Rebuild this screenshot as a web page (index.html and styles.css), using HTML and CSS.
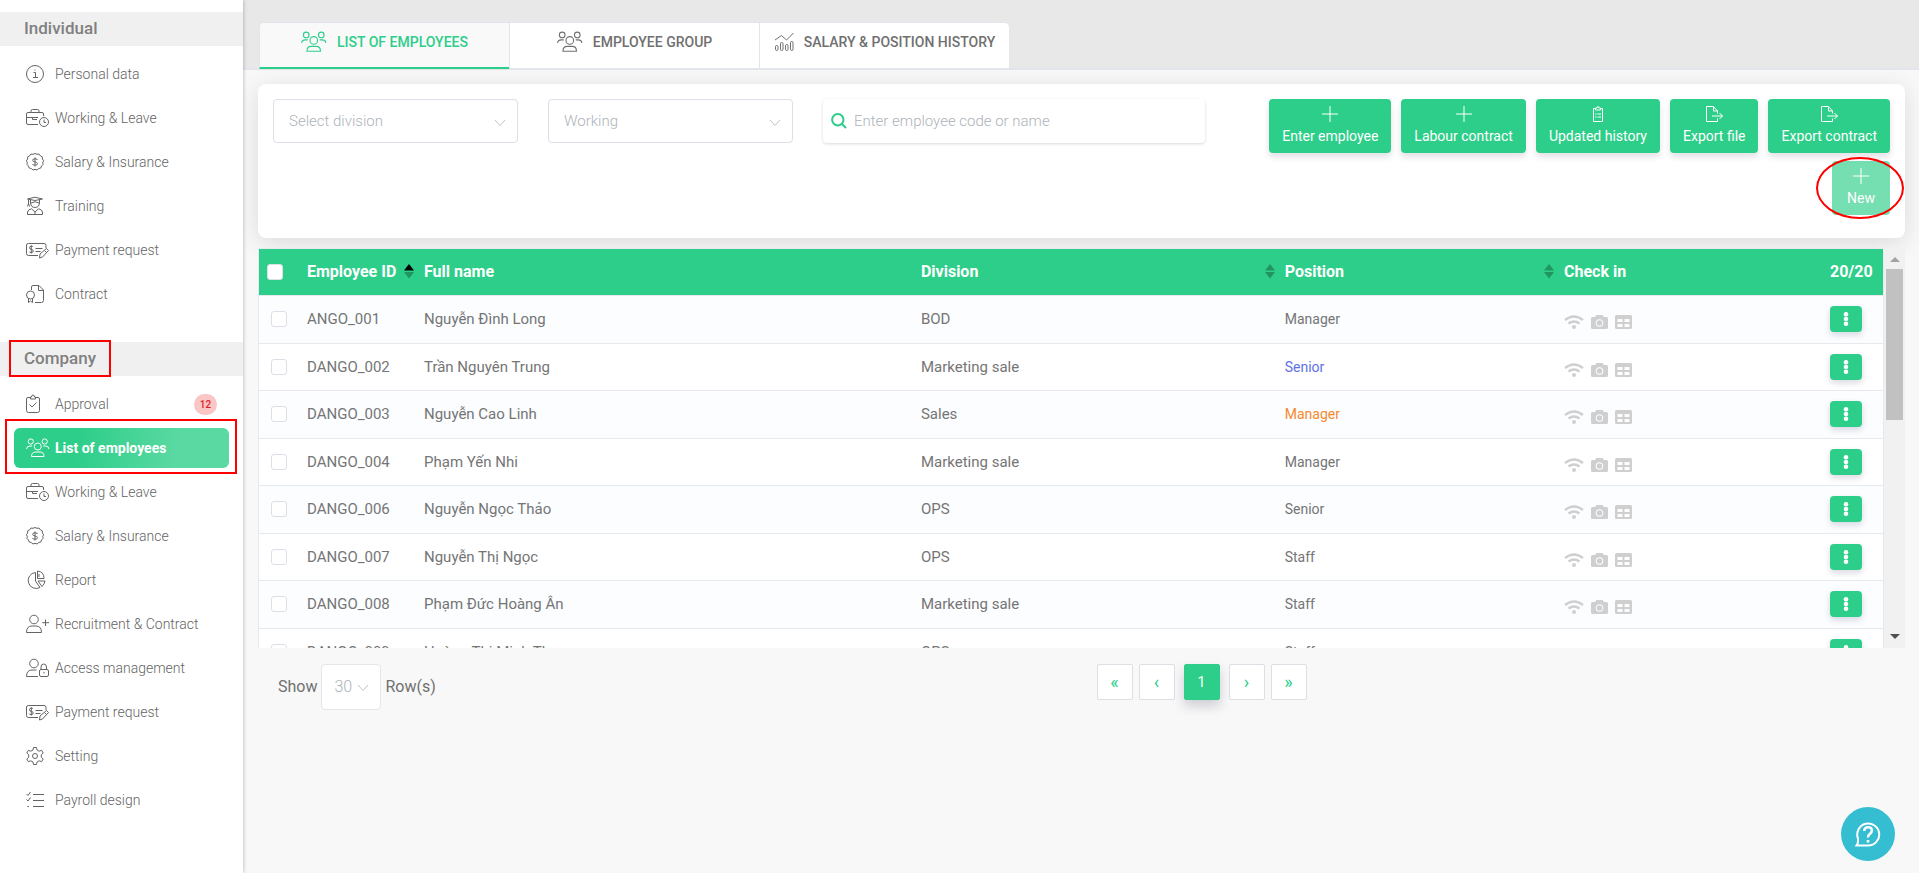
FILE: index.html
```html
<!DOCTYPE html>
<html lang="en">
<head>
<meta charset="utf-8">
<title>List of employees</title>
<link rel="stylesheet" href="styles.css">
</head>
<body>
<svg class="sprite" aria-hidden="true">
  <symbol id="i-info" viewBox="0 0 24 20"><circle cx="9" cy="10" r="8.5"/><path d="M7.5 8.5H9.500v5M7 13.500h5M8.500 6h1"/></symbol>
  <symbol id="i-work" viewBox="0 0 24 20"><path d="M12 16.500H2Q.5 16.500 .5 15V6Q.5 4.500 2 4.500H16Q17.500 4.500 17.500 6V8M5 4.500V3Q5 1.500 6.500 1.500H11.500Q13 1.500 13 3V4.500M.5 9.500H12M6.500 9.500V11.500H11"/><circle cx="18" cy="14" r="4.500"/><path d="M18 11.500V14.500H20"/></symbol>
  <symbol id="i-salary" viewBox="0 0 24 20"><path d="M9 1.500 11 2.300 13 2 14.300 3.800 16.300 4.800 16.400 7 17.600 8.800 16.800 10.500 17 12.500 15.500 14 14.800 16 12.700 16.600 11 18 9 17.300 7 18 5.300 16.600 3.200 16 2.500 14 1 12.500 1.300 10.500.4 8.800 1.600 7 1.700 4.800 3.700 3.800 5 2 7 2.300Z"/><path d="M11.500 8Q11.500 6.800 9 6.800T6.700 8.300Q6.700 9.700 9 10T11.500 11.700Q11.500 13.200 9 13.200T6.500 12M9 5.500V14.500"/></symbol>
  <symbol id="i-train" viewBox="0 0 24 20"><path d="M1.500 3 9 1.200 16.500 3 9 4.500ZM4.500 3.800V7Q5 11.500 9 11.500T13.500 7V3.800M2.500 3.300V8M1.500 10.500 2.500 7.500 3.500 10.500M5 7Q9 4.500 13 7M1.500 18.500V16Q2 13.500 5.500 12.800L9 16 12.500 12.800Q16 13.500 16.500 16V18.500ZM9 16V18.500"/></symbol>
  <symbol id="i-pay" viewBox="0 0 24 20"><path d="M12 15.500H2.500Q.5 15.500 .5 13.500V5Q.5 3.500 2.500 3.500H18Q20 3.500 20 5.500V8M7 6.800Q6.500 6.200 5.300 6.200 3.500 6.200 3.500 7.700T5.300 9.300 7.200 11 5.300 12.600 3.300 11.700M5.300 5.200V13.500M9.500 8.500H16.500M9.500 11.500H14.500M14 14 20.500 8.500 22.500 10.500 16.500 17 13.500 18ZM18.500 10.500 20.500 12.500"/></symbol>
  <symbol id="i-contract" viewBox="0 0 24 20"><path d="M5.500 6V3Q5.500 1.500 7 1.500H13L17.500 6V16.500Q17.500 18.500 15.500 18.500H9M12.500 1.500V6.500H17.500"/><circle cx="4.500" cy="11" r="4"/><path d="M2.500 14.500V18.500L4.500 17 6.500 18.500V14.500"/></symbol>
  <symbol id="i-approve" viewBox="0 0 24 20"><path d="M4.500 3.500H2Q.5 3.500 .5 5V16.500Q.5 18.500 2.500 18.500H11.500Q13.500 18.500 13.500 16.500V5Q13.500 3.500 12 3.500H9.500M4.500 5V3H5.500Q5.500 1 7 1T8.500 3H9.500V5ZM3.500 10.500 6 13 10.500 8.500"/></symbol>
  <symbol id="i-people" viewBox="0 0 24 20"><circle cx="4.800" cy="3.500" r="2.600"/><circle cx="18.700" cy="3.500" r="2.600"/><circle cx="11.800" cy="8.500" r="3.500"/><path d="M.6 11Q.6 8 4 8H6.200M22.900 11Q22.900 8 19.500 8H17.300M5.500 18.500Q5.500 14 9.500 14H14Q18 14 18 18.500Z"/></symbol>
  <symbol id="i-report" viewBox="0 0 24 20"><path d="M9.500 2.500A8 8 0 1 0 14 17.500L9.500 11ZM11.500 1V8.500H18Q18 1.500 11.500 1ZM12 11H19Q18.500 14 16 16.500ZM13 4V7"/></symbol>
  <symbol id="i-recruit" viewBox="0 0 24 20"><circle cx="8" cy="5.500" r="4.300"/><path d="M.5 18.500Q.5 12 6 12H10Q15.500 12 15.500 18.500ZM19.500 5.500V12M16.200 8.700H23"/></symbol>
  <symbol id="i-access" viewBox="0 0 24 20"><circle cx="8" cy="5.500" r="4.300"/><path d="M12 18.500H.5Q.5 12 6 12H10.500M15 11.500V9Q15 6 17.700 6T20.500 9V11.500M18 14V15.500"/><rect x="13.500" y="11.500" width="9" height="7" rx="1.500"/></symbol>
  <symbol id="i-setting" viewBox="0 0 24 20"><circle cx="9" cy="10" r="2.500"/><path d="M7.500 1.500H10.500L11 4 13.200 5.200 15.600 4.300 17.200 7 15.300 8.700V11.300L17.200 13 15.600 15.700 13.200 14.800 11 16 10.500 18.500H7.500L7 16 4.800 14.800 2.400 15.700.8 13 2.700 11.300V8.700L.8 7 2.400 4.300 4.800 5.200 7 4Z"/></symbol>
  <symbol id="i-payroll" viewBox="0 0 24 20"><path d="M7 4.500H18M7 10.500H18M7 16.500H18M.5 4 2 5.500 4.500 2M.5 9.500 2 11 4.500 7.500M1.500 16.500H3"/></symbol>
  <symbol id="i-chart" viewBox="0 0 20 20"><path d="M1 8 7.500 3.500 12.500 8 19.500 1"/><rect x="1.500" y="13.500" width="2.500" height="5" rx="1.200"/><rect x="6.500" y="10.500" width="2.500" height="8" rx="1.200"/><rect x="11.500" y="12.500" width="2.500" height="6" rx="1.200"/><rect x="16.500" y="9.500" width="2.500" height="9" rx="1.200"/></symbol>
  <symbol id="i-plus" viewBox="0 0 16 16"><path d="M8 0V16M0 8H16"/></symbol>
  <symbol id="i-list" viewBox="0 0 16 16"><path d="M5.500 2.500H3.500V15.500H12.500V2.500H10.500M5.500 4V2H7Q7 .5 8 .5T9 2H10.500V4ZM5 8H6.500M5 11H6.500M7.500 8H11M7.500 11H11"/></symbol>
  <symbol id="i-export" viewBox="0 0 18 16"><path d="M12.500 7.500V5L8.500 .5H1.500V15.500H12.500V12.500M8.500 .5V5H12.500M7 10H17.500M14.500 7 17.500 10 14.500 13"/></symbol>
  <symbol id="i-down" viewBox="0 0 12 8"><path d="M1 1 6 6.500 11 1"/></symbol>
  <symbol id="i-search" viewBox="0 0 16 16"><circle cx="6.800" cy="6.800" r="5.700"/><path d="M11 11 15 15"/></symbol>
  <symbol id="i-wifi" viewBox="0 0 20 14"><path d="M1 5Q10-2 19 5M4.500 8.500Q10 4.500 15.500 8.500" fill="none" stroke="currentColor" stroke-width="2.400"/><circle cx="10" cy="12" r="2"/></symbol>
  <symbol id="i-camera" viewBox="0 0 17 14"><path fill-rule="evenodd" d="M1.500 2H4L5.500 0H11.500L13 2H15.500Q17 2 17 3.500V12.500Q17 14 15.500 14H1.500Q0 14 0 12.500V3.500Q0 2 1.500 2ZM8.500 4.200A3.800 3.800 0 1 0 8.500 11.800 3.800 3.800 0 1 0 8.500 4.200ZM8.500 5.200A2.800 2.800 0 1 1 8.500 10.800 2.800 2.800 0 1 1 8.500 5.200Z"/></symbol>
  <symbol id="i-grid" viewBox="0 0 17 14"><path fill-rule="evenodd" d="M1.500 0H15.500Q17 0 17 1.500V12.500Q17 14 15.500 14H1.500Q0 14 0 12.500V1.500Q0 0 1.500 0ZM2.500 4V7H7.500V4ZM9.500 4V7H14.500V4ZM2.500 9V12H7.500V9ZM9.500 9V12H14.500V9Z"/></symbol>
  <symbol id="i-dots" viewBox="0 0 6 14"><circle cx="3" cy="2.300" r="2.300"/><circle cx="3" cy="7" r="2.300"/><circle cx="3" cy="11.700" r="2.300"/></symbol>
  <symbol id="i-sort" viewBox="0 0 10 15"><path d="M5 0 10 6.500H0Z" fill="currentColor"/><path d="M0 8H10L5 14.500Z"/></symbol>
  <symbol id="i-help" viewBox="0 0 26 26"><path d="M3 17.500A11 11 0 1 1 13 24.500H1.500Q3.500 22 3 17.500Z" stroke-width="2"/><path d="M9.300 10Q9.300 6.300 13.200 6.300T16.800 9.800Q16.800 11.500 14.800 13T13 16.500" stroke-width="2.600"/><path d="M13 19V21.500" stroke-width="2.600"/></symbol>
</svg>

<div class="app">
  <nav class="sidebar">
    <section class="group">
      <h2 class="group-title">Individual</h2>
      <a class="item" href="#"><svg class="icon"><use href="#i-info"/></svg>Personal data</a>
      <a class="item" href="#"><svg class="icon"><use href="#i-work"/></svg>Working &amp; Leave</a>
      <a class="item" href="#"><svg class="icon"><use href="#i-salary"/></svg>Salary &amp; Insurance</a>
      <a class="item" href="#"><svg class="icon"><use href="#i-train"/></svg>Training</a>
      <a class="item" href="#"><svg class="icon"><use href="#i-pay"/></svg>Payment request</a>
      <a class="item" href="#"><svg class="icon"><use href="#i-contract"/></svg>Contract</a>
    </section>
    <section class="group">
      <h2 class="group-title">Company<span class="mark mark-title"></span></h2>
      <a class="item" href="#"><svg class="icon"><use href="#i-approve"/></svg>Approval<span class="badge">12</span></a>
      <a class="item active" href="#"><svg class="icon"><use href="#i-people"/></svg>List of employees<span class="mark mark-item"></span></a>
      <a class="item" href="#"><svg class="icon"><use href="#i-work"/></svg>Working &amp; Leave</a>
      <a class="item" href="#"><svg class="icon"><use href="#i-salary"/></svg>Salary &amp; Insurance</a>
      <a class="item" href="#"><svg class="icon"><use href="#i-report"/></svg>Report</a>
      <a class="item" href="#"><svg class="icon"><use href="#i-recruit"/></svg>Recruitment &amp; Contract</a>
      <a class="item" href="#"><svg class="icon"><use href="#i-access"/></svg>Access management</a>
      <a class="item" href="#"><svg class="icon"><use href="#i-pay"/></svg>Payment request</a>
      <a class="item" href="#"><svg class="icon"><use href="#i-setting"/></svg>Setting</a>
      <a class="item" href="#"><svg class="icon"><use href="#i-payroll"/></svg>Payroll design</a>
    </section>
  </nav>

  <div class="page">
    <header class="topbar">
      <div class="tabs">
        <a class="tab current" href="#"><svg class="icon tab-icon"><use href="#i-people"/></svg>LIST OF EMPLOYEES</a>
        <a class="tab" href="#"><svg class="icon tab-icon"><use href="#i-people"/></svg>EMPLOYEE GROUP</a>
        <a class="tab" href="#"><svg class="icon chart-icon"><use href="#i-chart"/></svg>SALARY &amp; POSITION HISTORY</a>
      </div>
    </header>

    <main class="content">
      <form class="filters">
        <div class="pick"><select class="select" aria-label="Division"><option>Select division</option></select><svg class="chevron"><use href="#i-down"/></svg></div>
        <div class="pick"><select class="select" aria-label="Status"><option>Working</option></select><svg class="chevron"><use href="#i-down"/></svg></div>
        <label class="search"><svg class="search-icon"><use href="#i-search"/></svg><input class="search-input" type="text" aria-label="Search" placeholder="Enter employee code or name"></label>
        <div class="actions">
          <button class="action" type="button"><svg class="action-icon"><use href="#i-plus"/></svg>Enter employee</button>
          <button class="action" type="button"><svg class="action-icon"><use href="#i-plus"/></svg>Labour contract</button>
          <button class="action" type="button"><svg class="action-icon"><use href="#i-list"/></svg>Updated history</button>
          <button class="action" type="button"><svg class="action-icon"><use href="#i-export"/></svg>Export file</button>
          <button class="action" type="button"><svg class="action-icon"><use href="#i-export"/></svg>Export contract</button>
          <div class="new"><button class="action faded" type="button"><svg class="action-icon"><use href="#i-plus"/></svg>New</button><span class="ring"></span></div>
        </div>
      </form>

      <div class="grid">
        <div class="grid-view">
          <table class="table">
            <colgroup><col class="c-check"><col class="c-id"><col class="c-name"><col class="c-div"><col class="c-pos"><col><col class="c-menu"></colgroup>
            <thead>
              <tr>
                <th class="check-head"><input class="tick" type="checkbox" aria-label="Select all"></th>
                <th><span class="head">Employee ID<svg class="sort asc"><use href="#i-sort"/></svg></span></th>
                <th>Full name</th>
                <th><span class="head">Division<svg class="sort"><use href="#i-sort"/></svg></span></th>
                <th><span class="head">Position<svg class="sort"><use href="#i-sort"/></svg></span></th>
                <th>Check in</th>
                <th>20/20</th>
              </tr>
            </thead>
            <tbody>
              <tr><td class="check"><input class="tick" type="checkbox" aria-label="ANGO_001"></td><td>ANGO_001</td><td>Nguyễn Đình Long</td><td>BOD</td><td class="position">Manager</td><td><span class="ways"><svg class="wifi"><use href="#i-wifi"/></svg><svg class="way"><use href="#i-camera"/></svg><svg class="way"><use href="#i-grid"/></svg></span></td><td><button class="menu" aria-label="Actions"><svg class="dots"><use href="#i-dots"/></svg></button></td></tr>
              <tr><td class="check"><input class="tick" type="checkbox" aria-label="DANGO_002"></td><td>DANGO_002</td><td>Trần Nguyên Trung</td><td>Marketing sale</td><td class="position violet">Senior</td><td><span class="ways"><svg class="wifi"><use href="#i-wifi"/></svg><svg class="way"><use href="#i-camera"/></svg><svg class="way"><use href="#i-grid"/></svg></span></td><td><button class="menu" aria-label="Actions"><svg class="dots"><use href="#i-dots"/></svg></button></td></tr>
              <tr><td class="check"><input class="tick" type="checkbox" aria-label="DANGO_003"></td><td>DANGO_003</td><td>Nguyễn Cao Linh</td><td>Sales</td><td class="position orange">Manager</td><td><span class="ways"><svg class="wifi"><use href="#i-wifi"/></svg><svg class="way"><use href="#i-camera"/></svg><svg class="way"><use href="#i-grid"/></svg></span></td><td><button class="menu" aria-label="Actions"><svg class="dots"><use href="#i-dots"/></svg></button></td></tr>
              <tr><td class="check"><input class="tick" type="checkbox" aria-label="DANGO_004"></td><td>DANGO_004</td><td>Phạm Yến Nhi</td><td>Marketing sale</td><td class="position">Manager</td><td><span class="ways"><svg class="wifi"><use href="#i-wifi"/></svg><svg class="way"><use href="#i-camera"/></svg><svg class="way"><use href="#i-grid"/></svg></span></td><td><button class="menu" aria-label="Actions"><svg class="dots"><use href="#i-dots"/></svg></button></td></tr>
              <tr><td class="check"><input class="tick" type="checkbox" aria-label="DANGO_006"></td><td>DANGO_006</td><td>Nguyễn Ngọc Thảo</td><td>OPS</td><td class="position">Senior</td><td><span class="ways"><svg class="wifi"><use href="#i-wifi"/></svg><svg class="way"><use href="#i-camera"/></svg><svg class="way"><use href="#i-grid"/></svg></span></td><td><button class="menu" aria-label="Actions"><svg class="dots"><use href="#i-dots"/></svg></button></td></tr>
              <tr><td class="check"><input class="tick" type="checkbox" aria-label="DANGO_007"></td><td>DANGO_007</td><td>Nguyễn Thị Ngọc</td><td>OPS</td><td class="position">Staff</td><td><span class="ways"><svg class="wifi"><use href="#i-wifi"/></svg><svg class="way"><use href="#i-camera"/></svg><svg class="way"><use href="#i-grid"/></svg></span></td><td><button class="menu" aria-label="Actions"><svg class="dots"><use href="#i-dots"/></svg></button></td></tr>
              <tr><td class="check"><input class="tick" type="checkbox" aria-label="DANGO_008"></td><td>DANGO_008</td><td>Phạm Đức Hoàng Ân</td><td>Marketing sale</td><td class="position">Staff</td><td><span class="ways"><svg class="wifi"><use href="#i-wifi"/></svg><svg class="way"><use href="#i-camera"/></svg><svg class="way"><use href="#i-grid"/></svg></span></td><td><button class="menu" aria-label="Actions"><svg class="dots"><use href="#i-dots"/></svg></button></td></tr>
              <tr><td class="check"><input class="tick" type="checkbox" aria-label="DANGO_009"></td><td>DANGO_009</td><td>Hoàng Thị Minh Thu</td><td>OPS</td><td class="position">Staff</td><td><span class="ways"><svg class="wifi"><use href="#i-wifi"/></svg><svg class="way"><use href="#i-camera"/></svg><svg class="way"><use href="#i-grid"/></svg></span></td><td><button class="menu" aria-label="Actions"><svg class="dots"><use href="#i-dots"/></svg></button></td></tr>
            </tbody>
          </table>
        </div>
        <div class="scrollbar"><span class="arrow arrow-up"></span><span class="thumb"></span><span class="arrow arrow-down"></span></div>
      </div>

      <footer class="footer">
        <div class="page-size">
          <label for="size">Show</label>
          <div class="size-pick"><select class="select size-select" id="size"><option>30</option></select><svg class="chevron"><use href="#i-down"/></svg></div>
          <span>Row(s)</span>
        </div>
        <div class="pager">
          <button class="step">«</button>
          <button class="step">‹</button>
          <button class="step on">1</button>
          <button class="step">›</button>
          <button class="step">»</button>
        </div>
      </footer>
    </main>
  </div>
</div>
<button class="help" aria-label="Help"><svg class="help-icon"><use href="#i-help"/></svg></button>
</body>
</html>
```

FILE: styles.css
```css
* { box-sizing: border-box; }

body {
  margin: 0;
  background: #f8f8f8;
  color: #707070;
  font-family: Roboto, "Noto Sans", sans-serif;
  font-size: 15px;
  line-height: 20px;
}

a { color: inherit; text-decoration: none; }
button, input, select { font: inherit; }
svg { display: block; flex: none; }
.sprite { position: absolute; width: 0; height: 0; }

.app { display: flex; min-height: 100vh; }

/* Sidebar */
.sidebar {
  position: relative;
  z-index: 1;
  flex: none;
  width: 243px;
  padding-top: 12px;
  background: #fff;
  box-shadow: 0 0 4px rgba(0, 0, 0, 0.3);
}
.group { display: flex; flex-direction: column; gap: 4px; margin-bottom: 28px; }
.group-title {
  position: relative;
  margin: 0 0 4px;
  padding: 0 24px 2px;
  background: #f0f0f0;
  color: #808080;
  font-size: 17px;
  font-weight: 500;
  line-height: 32px;
}
.item {
  position: relative;
  display: flex;
  align-items: center;
  gap: 5px;
  height: 40px;
  margin: 0 14px;
  padding: 0 12px;
  border-radius: 6px;
  color: #646464;
  font-size: 14px;
  font-weight: 300;
}
.icon {
  width: 24px;
  height: 20px;
  fill: none;
  stroke: currentColor;
  stroke-width: 1;
}
.item.active {
  background: linear-gradient(100deg, #2dce89 30%, #5ad9a2 75%);
  color: #fff;
  font-weight: 700;
}
.badge {
  margin-left: auto;
  width: 23px;
  border-radius: 11px;
  background: #f9c5c5;
  color: #e01f26;
  font-size: 10px;
  font-weight: 500;
  line-height: 21px;
  text-align: center;
}
.mark { position: absolute; border: 2px solid #f00; }
.mark-title { left: 9px; top: -2px; width: 102px; height: 37px; }
.mark-item { inset: -9px -8px -6px -9px; }

/* Tabs */
.page { flex: 1; min-width: 0; }
.topbar {
  height: 70px;
  padding: 22px 15px 0 16px;
  background: #e8e8e8;
  border-bottom: 2px solid #e2e5ec;
}
.tabs { display: flex; }
.tab {
  display: flex;
  align-items: center;
  justify-content: center;
  gap: 10px;
  width: 250px;
  height: 47px;
  padding-bottom: 8px;
  border: 1px solid #e2e5ec;
  border-right: 0;
  background: #fff;
  font-size: 14px;
  font-weight: 500;
}
.tab:first-child { border-top-left-radius: 5px; }
.tab:last-child { border-top-right-radius: 5px; }
.tab.current {
  padding-bottom: 7px;
  border-bottom: 2px solid #2dce89;
  background: #f9f9f9;
  color: #2dce89;
}
.tab-icon { width: 26px; height: 22px; }
.chart-icon { width: 20px; }

/* Filter card */
.content { padding: 14px 14px 0 15px; }
.filters {
  display: flex;
  align-items: flex-start;
  gap: 30px;
  min-height: 154px;
  padding: 15px;
  border-radius: 8px;
  background: #fff;
  box-shadow: 0 5px 25px rgba(0, 0, 0, 0.12);
}
.pick { position: relative; flex: 0 1 245px; }
.select {
  width: 100%;
  height: 44px;
  padding: 0 15px;
  border: 1px solid #dcdfe8;
  border-radius: 4px;
  background: #fff;
  color: #adb3b9;
  font-weight: 300;
  appearance: none;
}
.chevron {
  position: absolute;
  right: 12px;
  top: 20px;
  width: 12px;
  height: 8px;
  fill: none;
  stroke: #bfc3ca;
  pointer-events: none;
}
.search {
  display: flex;
  align-items: center;
  gap: 7px;
  flex: 0 1 382px;
  height: 44px;
  padding: 0 8px;
  border-radius: 4px;
  box-shadow: 0 1px 3px rgba(0, 0, 0, 0.15);
}
.search-icon { width: 16px; height: 16px; fill: none; stroke: #2dce89; stroke-width: 2; }
.search-input { flex: 1; min-width: 0; border: 0; padding: 0; outline: 0; background: none; font-weight: 300; }
.search-input::placeholder { color: #adb3b9; }
.actions { display: flex; flex: 1; flex-wrap: wrap; justify-content: flex-end; gap: 8px 10px; }
.action {
  display: flex;
  flex-direction: column;
  align-items: center;
  gap: 4px;
  height: 54px;
  padding: 7px 13px;
  border: 0;
  border-radius: 4px;
  background: #2dce89;
  box-shadow: 0 4px 6px rgba(50, 50, 93, 0.14);
  color: #fff;
  font-size: 14px;
}
.action-icon { width: 18px; height: 16px; fill: none; stroke: #fff; stroke-width: 1; }
.new { position: relative; flex: none; }
.faded { padding: 7px 15px; opacity: 0.65; box-shadow: none; }
.ring { position: absolute; inset: -4px -14px -4px -16px; border: 2px solid #f00; border-radius: 50%; }

/* Employee grid */
.grid { display: flex; height: 400px; margin-top: 10px; overflow: hidden; }
.grid-view { flex: 1; min-width: 0; overflow: hidden; border: 1px solid #e6eaee; border-bottom: 0; }
.table { width: 100%; table-layout: fixed; border-collapse: collapse; color: #757575; }
.c-check { width: 38px; }
.c-id { width: 117px; }
.c-name { width: 30.6%; }
.c-div { width: 22.4%; }
.c-pos { width: 17.2%; }
.c-menu { width: 63px; }
.table th {
  height: 46px;
  padding: 0 0 0 10px;
  background: #2dce89;
  color: #fff;
  font-size: 16px;
  font-weight: 700;
  text-align: left;
  white-space: nowrap;
}
.table td { height: 48px; padding: 0 0 0 10px; border-top: 1px solid #e6eaee; background: #fff; }
.table tr:nth-child(even) td { height: 47px; }
.table tr:nth-child(odd) td { background: #fbfdff; }
.table .check-head { padding-left: 8px; }
.table .check { padding-left: 12px; }
.position { font-size: 14px; }
.violet { color: #5e72e4; }
.orange { color: #f5892e; }
.head { display: flex; align-items: center; justify-content: space-between; }
.sort { width: 10px; height: 15px; color: #22955f; fill: #22955f; }
.sort.asc { color: #000; }
.tick {
  display: block;
  width: 16px;
  height: 16px;
  margin: 0;
  border: 1px solid #dcdfe8;
  border-radius: 3px;
  background: #fff;
  appearance: none;
}
.ways { display: flex; gap: 7px; padding-top: 6px; color: #cfcfcf; fill: currentColor; }
.wifi { width: 20px; height: 14px; }
.way { width: 17px; height: 14px; }
.menu {
  display: flex;
  align-items: center;
  justify-content: center;
  width: 32px;
  height: 26px;
  padding: 0;
  border: 0;
  border-radius: 4px;
  background: #2dce89;
  box-shadow: 0 3px 6px rgba(50, 50, 93, 0.18);
}
.dots { width: 6px; height: 14px; fill: #fff; }

.scrollbar {
  display: flex;
  flex-direction: column;
  align-items: center;
  flex: none;
  width: 21px;
  padding: 9px 0;
  background: #f1f1f1;
}
.arrow { border: 5px solid transparent; border-top-width: 0; border-bottom: 5px solid #a3a3a3; }
.thumb { width: 17px; height: 151px; margin-top: 7px; background: #c1c1c1; }
.arrow-down { margin-top: auto; border-top: 5px solid #505050; border-bottom-width: 0; }

/* Footer */
.footer { display: grid; grid-template-columns: 1fr 1fr; padding-top: 16px; }
.page-size { display: flex; align-items: center; gap: 4px; padding-left: 20px; font-size: 16px; }
.size-pick { position: relative; width: 60px; }
.size-select { height: 46px; padding: 0 12px; border-color: #e4e6ea; }
.pager { display: flex; gap: 6px; padding-left: 15px; }
.step {
  width: 36px;
  height: 36px;
  padding: 0;
  border: 1px solid #dcdfe3;
  border-radius: 2px;
  background: #fff;
  color: #2dce89;
  font-size: 18px;
}
.step.on {
  margin: 0 3px;
  border-color: #2dce89;
  background: #2dce89;
  box-shadow: 0 6px 12px rgba(50, 50, 93, 0.22);
  color: #fff;
  font-size: 14px;
}

.help {
  position: fixed;
  right: 24px;
  bottom: 12px;
  display: flex;
  align-items: center;
  justify-content: center;
  width: 54px;
  height: 54px;
  border: 0;
  border-radius: 50%;
  background: #35bdd2;
}
.help-icon { width: 26px; height: 26px; fill: none; stroke: #fff; }
```
